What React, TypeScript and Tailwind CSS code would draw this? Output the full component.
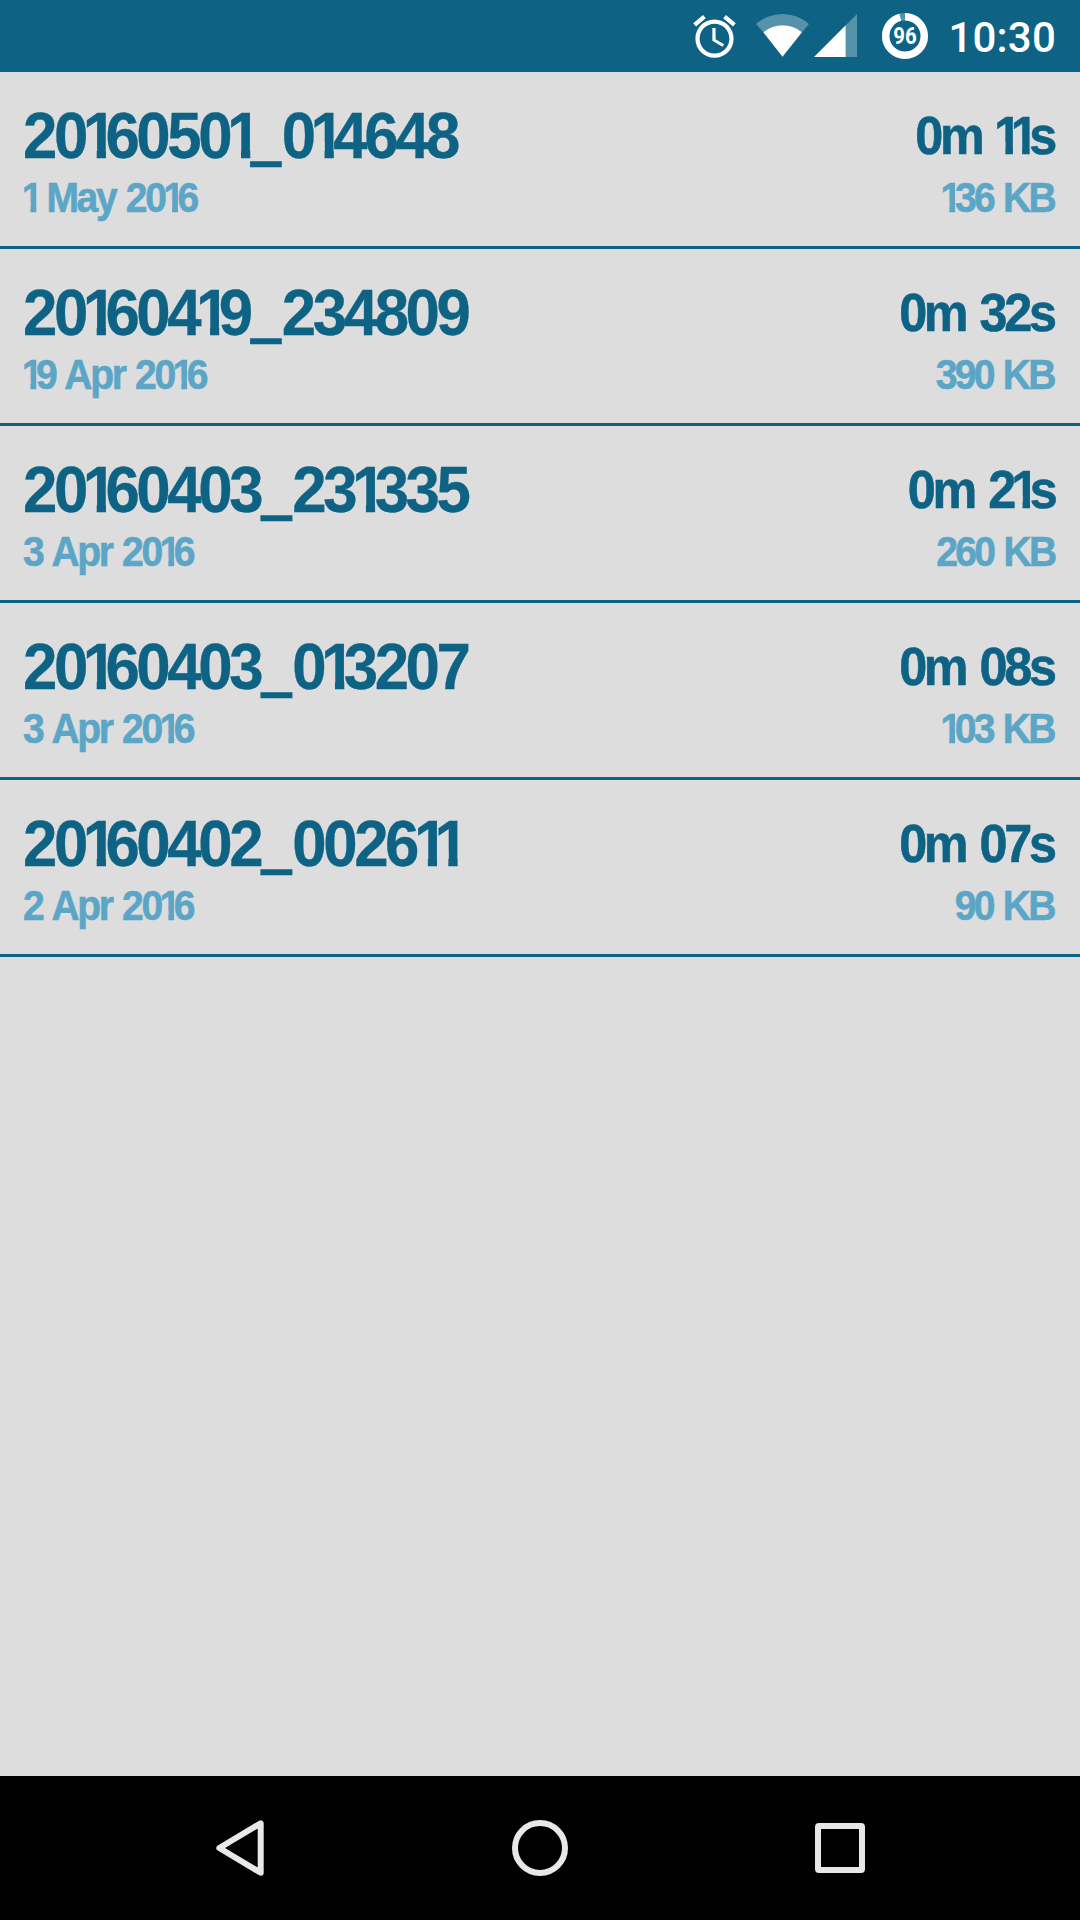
import { Fragment } from "react";

const recordings = [
  { name: "20160501_014648", date: "1 May 2016", length: "0m 11s", size: "136 KB" },
  { name: "20160419_234809", date: "19 Apr 2016", length: "0m 32s", size: "390 KB" },
  { name: "20160403_231335", date: "3 Apr 2016", length: "0m 21s", size: "260 KB" },
  { name: "20160403_013207", date: "3 Apr 2016", length: "0m 08s", size: "103 KB" },
  { name: "20160402_002611", date: "2 Apr 2016", length: "0m 07s", size: "90 KB" },
];

// Narrow "1" without its foot, and a heavier underscore
function Label({ text }: { text: string }) {
  return (
    <>
      {text.split("").map((char, i) => {
        if (char === "1") {
          return (
            <span
              key={i}
              className="inline-block w-[0.367em] -ml-[0.035em] whitespace-nowrap [clip-path:polygon(0_0,0.376em_0,0.376em_100%,0.226em_100%,0.226em_60%,0_60%)]"
            >
              1
            </span>
          );
        }
        if (char === "_") {
          return (
            <span
              key={i}
              className="relative top-[0.04em] ml-[0.005em] text-[1.14em] leading-[0] font-[Roboto,sans-serif] font-normal tracking-normal"
            >
              _
            </span>
          );
        }
        return <Fragment key={i}>{char}</Fragment>;
      })}
    </>
  );
}

function StatusBar() {
  return (
    <header className="flex h-[72px] items-start justify-end bg-[#0e6385] pr-[24px] text-white">
      <svg className="mt-[11px] size-[51px]" viewBox="0 0 24 24" fill="currentColor">
        <path d="M22 5.72l-4.6-3.86-1.29 1.53 4.6 3.86L22 5.72zM7.88 3.39L6.6 1.86 2 5.71l1.29 1.53 4.59-3.85zM12.5 8H11v6l4.75 2.85.75-1.23-4-2.37V8zM12 4c-4.97 0-9 4.03-9 9s4.02 9 9 9c4.97 0 9-4.03 9-9s-4.03-9-9-9zm0 16c-3.87 0-7-3.13-7-7s3.13-7 7-7 7 3.13 7 7-3.13 7-7 7z" />
      </svg>
      <svg className="ml-4 h-[72px] w-[54px]" viewBox="0 0 54 72" fill="currentColor">
        <path d="M0 24A40 40 0 0 1 53 24L46 32.3A30 30 0 0 0 7.3 32.3Z" opacity=".3" />
        <path d="M7.3 32.3A30 30 0 0 1 46 32.3L26.5 56.7Z" />
      </svg>
      <svg className="ml-1 h-[72px] w-[43px]" viewBox="0 0 43 72" fill="currentColor">
        <path d="M31.7 25.3L43 14V57H31.7Z" opacity=".3" />
        <path d="M0 57L31.7 25.3V57Z" />
      </svg>
      <svg className="ml-[25px] h-[72px] w-[46px]" viewBox="0 0 46 72">
        <circle cx="23" cy="36" r="19.3" fill="none" stroke="#fff" strokeOpacity=".3" strokeWidth="7.4" />
        <circle
          cx="23"
          cy="36"
          r="19.3"
          fill="none"
          stroke="#fff"
          strokeWidth="7.4"
          pathLength="100"
          strokeDasharray="96 4"
          transform="rotate(-90 23 36)"
        />
        <text
          x="11.3"
          y="44"
          textLength="23.4"
          lengthAdjust="spacingAndGlyphs"
          fill="#fff"
          className="font-[Roboto,sans-serif] text-[24px] font-bold"
        >
          96
        </text>
      </svg>
      <span className="mt-[14px] ml-[20px] font-[Roboto,sans-serif] text-[42px] leading-[48px] font-medium tracking-[0.2px]">
        10:30
      </span>
    </header>
  );
}

function NavBar() {
  return (
    <nav className="flex h-36 items-center justify-center bg-black text-[#e8e8e8]">
      {[
        <path key="back" d="M15.3 36L56.7 11.3V60.7Z" />,
        <circle key="home" cx="36" cy="36" r="25" />,
        <rect key="recent" x="14" y="14" width="44" height="44" rx="1" />,
      ].map((shape) => (
        <div key={shape.key} className="flex w-[300px] justify-center">
          <svg
            className="size-[72px]"
            viewBox="0 0 72 72"
            fill="none"
            stroke="currentColor"
            strokeWidth="6"
            strokeLinejoin="round"
          >
            {shape}
          </svg>
        </div>
      ))}
    </nav>
  );
}

export default function App() {
  return (
    <div className="flex h-[1920px] w-[1080px] flex-col bg-[#dddddd] font-['Liberation_Sans',Arial,sans-serif] font-bold">
      <StatusBar />
      <main className="flex-1">
        {recordings.map((rec) => (
          <div
            key={rec.name}
            className="flex h-[177px] justify-between border-b-[3px] border-[#0e6385] pt-[31px] pr-[26px] pl-[23px] whitespace-nowrap"
          >
            <div>
              <div className="h-[65px] origin-left scale-x-[0.95] text-[65px] leading-[65px] tracking-[-0.055em] text-[#0e6385] [-webkit-text-stroke:0.3px]">
                <Label text={rec.name} />
              </div>
              <div className="mt-[5px] origin-left scale-x-[0.93] text-[42px] leading-[50px] tracking-[-0.06em] [word-spacing:0.05em] text-[#5ba6c6] [-webkit-text-stroke:0.6px]">
                <Label text={rec.date} />
              </div>
            </div>
            <div className="text-right">
              <div className="h-[65px] origin-right scale-x-[0.95] text-[53px] leading-[65px] tracking-[-0.065em] [word-spacing:0.07em] text-[#0e6385] [-webkit-text-stroke:0.6px]">
                <Label text={rec.length} />
              </div>
              <div className="mt-[5px] origin-right scale-x-[0.93] text-[42px] leading-[50px] tracking-[-0.07em] [word-spacing:0.05em] text-[#5ba6c6] [-webkit-text-stroke:0.6px]">
                <Label text={rec.size} />
              </div>
            </div>
          </div>
        ))}
      </main>
      <NavBar />
    </div>
  );
}
